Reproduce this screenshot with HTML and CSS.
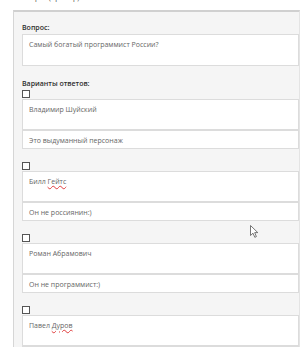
FILE: index.html
```html
<!DOCTYPE html>
<html lang="ru">
<head>
<meta charset="UTF-8">
<meta name="viewport" content="width=device-width, initial-scale=1.0">
<title>Редактирование вопроса</title>
<link rel="stylesheet" href="styles.css">
</head>
<body>
<div class="page-title">Вопрос (пример)</div>
<section class="card">
  <div class="field">
    <label class="field-label">Вопрос:</label>
    <div class="box box-question">Самый богатый программист России?</div>
  </div>

  <div class="field">
    <label class="field-label">Варианты ответов:</label>

    <div class="answer">
      <input type="checkbox" class="check">
      <div class="box box-area">Владимир Шуйский</div>
      <div class="box box-line">Это выдуманный персонаж</div>
    </div>

    <div class="answer">
      <input type="checkbox" class="check">
      <div class="box box-area">Билл <span class="typo">Гейтс</span></div>
      <div class="box box-line">Он не россиянин:)</div>
    </div>

    <div class="answer">
      <input type="checkbox" class="check">
      <div class="box box-area">Роман Абрамович</div>
      <div class="box box-line">Он не программист:)</div>
    </div>

    <div class="answer">
      <input type="checkbox" class="check">
      <div class="box box-area">Павел <span class="typo">Дуров</span></div>
      <div class="box box-line"></div>
    </div>
  </div>
</section>

<svg class="cursor" width="9" height="14" viewBox="0 0 9 14">
  <path d="M0.5 0.5 L0.5 10.5 L3 8.2 L4.8 12.3 L6.4 11.6 L4.7 7.6 L7.8 7.6 Z" fill="#fff" stroke="#555" stroke-width="0.8"/>
</svg>
</body>
</html>
```

FILE: styles.css
```css
* {
  margin: 0;
  padding: 0;
  box-sizing: border-box;
  font-family: 'Open Sans', sans-serif;
}

body {
  height: 347px;
  overflow: hidden;
  background: #fff;
  color: #333;
  font-size: 7px;
}

.page-title {
  margin: -8px 0 0 22px;
  height: 18px;
  line-height: 11px;
  color: #444;
}

.card {
  margin-left: 13px;
  min-height: 400px;
  background: #f5f5f5;
  border: 1px solid #d6d6d6;
  border-right-color: #e4e4e4;
  border-top: 2px solid #d0d0d0;
  padding: 10px 0 0 8px;
}

.field {
  margin-bottom: 12px;
}

.field-label {
  display: block;
  font-weight: 600;
  line-height: 11px;
  margin-bottom: 1px;
  color: #2d2d2d;
}

.box {
  background: #fff;
  border: 1px solid #dcdcdc;
  color: #666;
  padding: 4px 6px;
  line-height: 11px;
  white-space: nowrap;
}

.box-question {
  height: 32px;
  margin-top: 1px;
}

.box-area {
  height: 31px;
}

.box-line {
  height: 19px;
}

.answer {
  margin-bottom: 13px;
}

.check {
  appearance: none;
  display: block;
  width: 8px;
  height: 8px;
  margin: 0 0 1px;
  border: 1px solid #555;
  background: #fff;
}

.typo {
  text-decoration: underline wavy #e03c3c;
  text-decoration-thickness: 1px;
  text-underline-offset: 1px;
}

/* mouse pointer in the screenshot */
.cursor {
  position: absolute;
  left: 250px;
  top: 225px;
}
```
